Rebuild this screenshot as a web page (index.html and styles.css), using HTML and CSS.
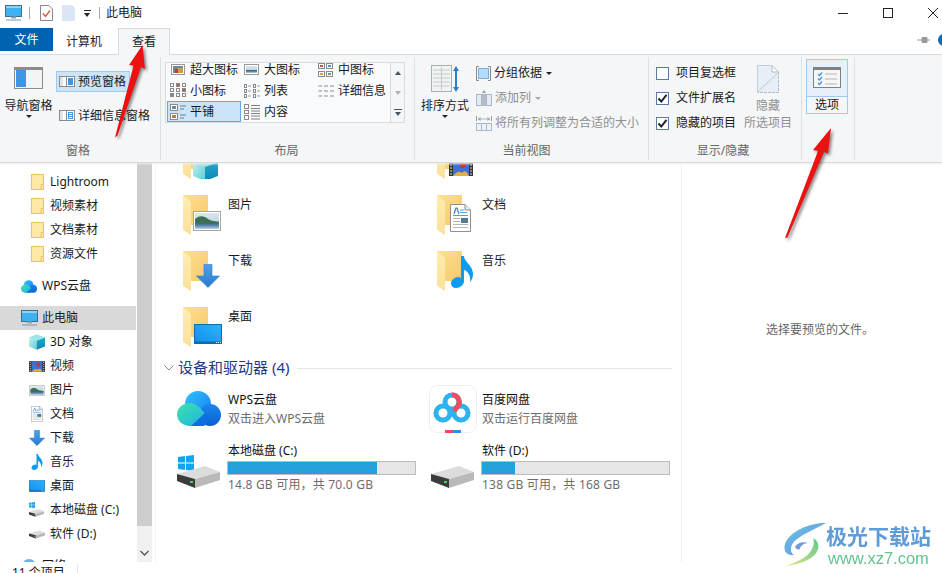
FILE: index.html
```html
<!DOCTYPE html>
<html lang="zh">
<head>
<meta charset="utf-8">
<title>此电脑</title>
<link rel="stylesheet" href="styles.css">
</head>
<body>
<svg class="defs" width="0" height="0" aria-hidden="true">
  <defs>
    <linearGradient id="gFolder" x1="0" y1="0" x2="1" y2="1"><stop offset="0" stop-color="#fee08f"/><stop offset="1" stop-color="#f4c96c"/></linearGradient>
    <linearGradient id="gFlap" x1="0" y1="0" x2="0" y2="1"><stop offset="0" stop-color="#ffedb0"/><stop offset="1" stop-color="#fbe09a"/></linearGradient>
    <linearGradient id="gBlue" x1="0" y1="0" x2="0" y2="1"><stop offset="0" stop-color="#4da3ea"/><stop offset="1" stop-color="#2a78cf"/></linearGradient>
    <linearGradient id="gDesk" x1="0" y1="1" x2="1" y2="0"><stop offset="0" stop-color="#0f8fe8"/><stop offset="1" stop-color="#2cb2ff"/></linearGradient>
    <linearGradient id="gSky" x1="0" y1="0" x2="0" y2="1"><stop offset="0" stop-color="#d8e8ee"/><stop offset=".5" stop-color="#c4d8e0"/><stop offset=".62" stop-color="#2f6188"/><stop offset=".8" stop-color="#5f8cab"/><stop offset="1" stop-color="#c3d6e3"/></linearGradient>
    <linearGradient id="gCubeL" x1="0" y1="0" x2="1" y2="1"><stop offset="0" stop-color="#c5f0ef"/><stop offset="1" stop-color="#58cdd4"/></linearGradient>
    <linearGradient id="gCubeR" x1="0" y1="0" x2="0" y2="1"><stop offset="0" stop-color="#25a8c8"/><stop offset="1" stop-color="#0d86b8"/></linearGradient>
    <linearGradient id="gWpsL" x1="0" y1="0" x2="1" y2="1"><stop offset="0" stop-color="#3fe3a6"/><stop offset="1" stop-color="#1cb0ea"/></linearGradient>
    <linearGradient id="gWpsT" x1="0" y1="0" x2="1" y2="1"><stop offset="0" stop-color="#2fc4ff"/><stop offset="1" stop-color="#1a7cf0"/></linearGradient>
    <linearGradient id="gWpsR" x1="0" y1="0" x2="0" y2="1"><stop offset="0" stop-color="#1b86ee"/><stop offset="1" stop-color="#0a5fd2"/></linearGradient>
    <linearGradient id="gSwirlB" x1="0" y1="0" x2="1" y2="1"><stop offset="0" stop-color="#6fc5ea"/><stop offset="1" stop-color="#5a8fd8"/></linearGradient>
    <linearGradient id="gSwirlG" x1="1" y1="0" x2="0" y2="1"><stop offset="0" stop-color="#5cc98a"/><stop offset="1" stop-color="#e6e58a"/></linearGradient>

    <symbol id="folder" viewBox="0 0 25 40">
      <polygon points="0,0 25,0 25,30 8,30" fill="url(#gFolder)"/>
      <polygon points="0,0 8,7 8,40 0,35" fill="url(#gFlap)"/>
    </symbol>
    <symbol id="picture" viewBox="0 0 28 20">
      <rect x=".5" y=".5" width="27" height="19" fill="#fff" stroke="#a5a5a5"/>
      <rect x="2" y="2" width="24" height="16" fill="url(#gSky)"/>
      <path d="M2 8C7 4 11 5 15 8 18 10 22 10 26 11V12H2Z" fill="#3d6f52"/>
    </symbol>
    <symbol id="doc" viewBox="0 0 21 28">
      <path d="M.5 .5H15L20.5 6V27.5H.5Z" fill="#fff" stroke="#8f8f8f"/>
      <path d="M15 .5V6H20.5" fill="#e8e8e8" stroke="#8f8f8f"/>
      <path d="M4 10 6 4H7L9 10" fill="none" stroke="#2b83d6" stroke-width="1.2"/>
      <path d="M10 6H14M10 8.5H17M3 11.5H18" stroke="#4aa2e6"/>
      <path d="M3 14.5H10M3 17.5H10M3 20.5H18M3 23.5H18" stroke="#b5b5b5"/>
      <rect x="11" y="14" width="7" height="5" fill="#4f7c92"/>
    </symbol>
    <symbol id="down" viewBox="0 0 24 24">
      <path d="M8 .5H16V12H23.5L12 23.5.5 12H8Z" fill="url(#gBlue)" stroke="#2a78cf" stroke-width=".6"/>
    </symbol>
    <symbol id="music" viewBox="0 0 22 32">
      <path d="M10 0H13C13 6 22 9 22 18 22 21 21 24 19 26 20 20 17 15 13 14V25C13 29 9 32 5 32 2 32 0 30 0 27.500 0 24 4 21 7 21 8 21 9 21.500 10 22Z" fill="#0a9cf0"/>
    </symbol>
    <symbol id="desk" viewBox="0 0 28 20">
      <rect x=".5" y=".5" width="27" height="19" fill="url(#gDesk)" stroke="#0f6da8"/>
      <rect x="1" y="17.500" width="26" height="2" fill="#0c6ea6"/>
      <path d="M22 18.500H23M24 18.500H25M26 18.500H27" stroke="#fff"/>
    </symbol>
    <symbol id="cube" viewBox="0 0 25 24">
      <polygon points="12,0 25,5 12,10 0,5" fill="#9de4e6"/>
      <polygon points="0,5 12,10 12,24 0,19" fill="url(#gCubeL)"/>
      <polygon points="12,10 25,5 25,19 12,24" fill="url(#gCubeR)"/>
    </symbol>
    <symbol id="film" viewBox="0 0 24 16">
      <rect width="24" height="16" fill="#333"/>
      <rect x="4" y="0" width="16" height="16" fill="#3f6fd0"/>
      <path d="M4 16 C8 11 11 11 13 13 15 10 18 11 20 16Z" fill="#e0b040"/>
      <circle cx="14" cy="5" r="3" fill="#c0392b"/>
      <path d="M1 2H3M1 5H3M1 8H3M1 11H3M1 14H3M21 2H23M21 5H23M21 8H23M21 11H23M21 14H23" stroke="#ddd"/>
    </symbol>
    <symbol id="nfolder" viewBox="0 0 13 16">
      <rect x=".5" y=".5" width="12" height="15" fill="#ffe9a6" stroke="#ecc555"/>
      <path d="M10 15V10.500H12.500" fill="none" stroke="#ecc555"/>
    </symbol>
    <symbol id="pc" viewBox="0 0 17 16">
      <rect x=".5" y=".5" width="16" height="11" fill="#3fb0f0" stroke="#3d6f92"/>
      <rect x="1" y="1" width="15" height="2" fill="#8ed2f7"/>
      <path d="M6 12.500H11" stroke="#8ea7b8" stroke-width="2"/>
      <path d="M1 15H16" stroke="#7b9ab0"/>
    </symbol>
    <symbol id="wpsc" viewBox="0 0 44 35">
      <circle cx="21" cy="13" r="13" fill="url(#gWpsT)"/>
      <circle cx="33" cy="24" r="11" fill="url(#gWpsR)"/>
      <path d="M13 12C19 12 22 16 26 20 30 24 30 35 22 35H13C6 35 0 30 0 23.500S6 12 13 12Z" fill="url(#gWpsL)"/>
      <path d="M14 35 28 22C30 25 33 35 25 35Z" fill="#0f6fe0"/>
    </symbol>
    <symbol id="baidu" viewBox="0 0 48 48">
      <rect x=".5" y=".5" width="47" height="47" rx="8" fill="#fff" stroke="#eeeeee"/>
      <circle cx="14" cy="28" r="7" fill="none" stroke="#2fb3ee" stroke-width="5"/>
      <circle cx="32" cy="28" r="7" fill="none" stroke="#2fb3ee" stroke-width="5"/>
      <circle cx="23" cy="17" r="7" fill="none" stroke="#2fb3ee" stroke-width="5"/>
      <path d="M23 10A7 7 0 0 1 29 21L25 26" fill="none" stroke="#e9505f" stroke-width="5"/>
      <rect x="16" y="45" width="8" height="3" fill="#f5476a"/>
      <rect x="24" y="45" width="8" height="3" fill="#2e8ff0"/>
    </symbol>
    <symbol id="disk" viewBox="0 0 43 22">
      <polygon points="0,8 28,0 43,6 18,13" fill="#dcdcdc"/>
      <polygon points="18,13 43,6 43,14 18,22" fill="#b9b9b9"/>
      <polygon points="0,8 18,13 18,22 0,15" fill="#3b3b3b"/>
      <rect x="13" y="15" width="3" height="2" fill="#3fd56a"/>
    </symbol>
    <symbol id="flag" viewBox="0 0 16 16">
      <polygon points="0,2 7,1 7,7.500 0,7.500" fill="#12a5ee"/>
      <polygon points="8,1 16,0 16,7.500 8,7.500" fill="#12a5ee"/>
      <polygon points="0,8.500 7,8.500 7,15 0,14" fill="#12a5ee"/>
      <polygon points="8,8.500 16,8.500 16,16 8,15" fill="#12a5ee"/>
    </symbol>
    <symbol id="pane" viewBox="0 0 16 11">
      <rect x=".5" y=".5" width="15" height="10" fill="#fff" stroke="#8a8a8a"/>
      <rect x="1" y="1" width="3" height="9" fill="#e4e4e4"/>
    </symbol>
  </defs>
</svg>

<div class="window">
  <header class="titlebar">
    <svg class="qa-pc" width="17" height="16"><use href="#pc"/></svg>
    <span class="qa-sep"></span>
    <svg class="qa-doc" width="13" height="16" viewBox="0 0 13 16"><path d="M.5 .5H9L12.500 4V15.500H.5Z" fill="#fff" stroke="#888"/><path d="M3 8.500 5.500 11.500 10 5.500" fill="none" stroke="#e0562c" stroke-width="1.300"/></svg>
    <svg class="qa-doc2" width="13" height="16" viewBox="0 0 13 16"><path d="M0 0H10L13 3V16H0Z" fill="#dbe5f3"/></svg>
    <span class="qa-drop"></span>
    <span class="qa-sep qa-sep2"></span>
    <span class="title-text">此电脑</span>
    <div class="win-controls">
      <svg width="10" height="10" viewBox="0 0 10 10"><path d="M0 5.500H10" stroke="#222"/></svg>
      <svg width="10" height="10" viewBox="0 0 10 10"><rect x=".5" y=".5" width="9" height="9" fill="none" stroke="#222"/></svg>
      <svg width="10" height="10" viewBox="0 0 10 10"><path d="M0 0 10 10M10 0 0 10" stroke="#222"/></svg>
    </div>
  </header>

  <nav class="tabs">
    <span class="tab tab-file">文件</span>
    <span class="tab tab-plain">计算机</span>
    <span class="tab tab-active">查看</span>
    <span class="tabs-right">
      <svg width="13" height="8" viewBox="0 0 13 8"><path d="M0 4H5M5 1.500H10V6.500H5ZM10 4H13" fill="#9a9a9a" stroke="#9a9a9a"/></svg>
      <span class="help-dot"></span>
    </span>
  </nav>

  <section class="ribbon">
    <div class="group g-pane">
      <div class="group-body">
        <div class="large large-nav">
          <svg width="29" height="22" viewBox="0 0 29 22"><rect x=".5" y=".5" width="28" height="21" fill="#f4f4f4" stroke="#8c8c8c"/><rect x="1" y="1" width="27" height="2" fill="#8c8c8c"/><rect x="2" y="3" width="10" height="17" fill="#3f96e4"/></svg>
          <span class="large-label">导航窗格</span>
          <span class="caret"></span>
        </div>
        <div class="pane-col">
          <div class="pane-btn pane-on">
            <svg width="16" height="11" viewBox="0 0 16 11"><use href="#pane"/><rect x="9" y="2" width="5" height="7" fill="#3f96e4"/><path d="M7.500 1V10" stroke="#8a8a8a"/></svg>
            <span>预览窗格</span>
          </div>
          <div class="pane-btn">
            <svg width="16" height="11" viewBox="0 0 16 11"><use href="#pane"/><rect x="9" y="2" width="5" height="7" fill="#3f96e4"/><path d="M7.500 1V10" stroke="#8a8a8a"/><path d="M10 3.500H13M10 5.500H13M10 7.500H13" stroke="#fff"/></svg>
            <span>详细信息窗格</span>
          </div>
        </div>
      </div>
      <div class="group-label">窗格</div>
    </div>

    <div class="group g-layout">
      <div class="group-body">
        <div class="gallery">
          <div class="gallery-grid">
            <div class="g-item"><svg width="16" height="12" viewBox="0 0 16 12"><rect x="1.500" y=".5" width="13" height="10" fill="#fff" stroke="#9a9a9a"/><rect x="3" y="2" width="10" height="7" fill="#6d8a9c"/><rect x="8" y="4" width="5" height="5" fill="#d49a3c"/><rect x="5" y="5" width="3" height="4" fill="#b0443a"/></svg><span>超大图标</span></div>
            <div class="g-item"><svg width="16" height="12" viewBox="0 0 16 12"><rect x=".5" y=".5" width="14" height="10" fill="#fff" stroke="#9a9a9a"/><rect x="2" y="2" width="11" height="7" fill="url(#gSky)"/></svg><span>大图标</span></div>
            <div class="g-item"><svg width="16" height="14" viewBox="0 0 16 14"><rect x=".5" y=".5" width="6" height="5" fill="#fff" stroke="#8a8a8a"/><rect x="8.500" y=".5" width="6" height="5" fill="#fff" stroke="#8a8a8a"/><rect x=".5" y="8.500" width="6" height="5" fill="#fff" stroke="#8a8a8a"/><rect x="8.500" y="8.500" width="6" height="5" fill="#fff" stroke="#8a8a8a"/><rect x="2" y="2" width="3" height="2" fill="#c0584a"/><rect x="10" y="2" width="3" height="2" fill="#5a8ac8"/><rect x="2" y="10" width="3" height="2" fill="#d0a04a"/><rect x="10" y="10" width="3" height="2" fill="#6aa06a"/></svg><span>中图标</span></div>

            <div class="g-item"><svg width="16" height="15" viewBox="0 0 16 15"><g fill="#fff" stroke="#8a8a8a"><rect x=".5" y=".5" width="3" height="3"/><rect x="6.500" y=".5" width="3" height="3"/><rect x="12.500" y=".5" width="3" height="3"/><rect x=".5" y="5.500" width="3" height="3"/><rect x="6.500" y="5.500" width="3" height="3"/><rect x="12.500" y="5.500" width="3" height="3"/><rect x=".5" y="10.500" width="3" height="3"/><rect x="6.500" y="10.500" width="3" height="3"/><rect x="12.500" y="10.500" width="3" height="3"/></g><rect x="7" y="1" width="2" height="2" fill="#c0584a"/><rect x="13" y="6" width="2" height="2" fill="#c0584a"/><rect x="1" y="11" width="2" height="2" fill="#5a8ac8"/></svg><span>小图标</span></div>
            <div class="g-item"><svg width="16" height="14" viewBox="0 0 16 14"><g fill="#fff" stroke="#8a8a8a"><rect x=".5" y=".5" width="2" height="3"/><rect x=".5" y="5.500" width="2" height="3"/><rect x=".5" y="10.500" width="2" height="3"/><rect x="9.500" y=".5" width="2" height="3"/><rect x="9.500" y="5.500" width="2" height="3"/><rect x="9.500" y="10.500" width="2" height="3"/></g><path d="M4 2H7M4 7H7M4 12H7M13 2H16M13 7H16M13 12H16" stroke="#9a9a9a"/></svg><span>列表</span></div>
            <div class="g-item"><svg width="16" height="14" viewBox="0 0 16 14"><path d="M.5 2H4M.5 7H4M.5 12H4M6 2H10M6 7H10M6 12H10M12 2H16M12 7H16M12 12H16" stroke="#8a8a8a"/></svg><span>详细信息</span></div>

            <div class="g-item g-selected"><svg width="16" height="16" viewBox="0 0 16 16"><rect x=".5" y=".5" width="7" height="6" fill="#fff" stroke="#8a8a8a"/><rect x=".5" y="9.500" width="7" height="6" fill="#fff" stroke="#8a8a8a"/><rect x="2" y="2" width="4" height="3" fill="#6d8a9c"/><rect x="2" y="11" width="4" height="3" fill="#c0784a"/><path d="M10 2H16M10 5H14M10 11H16M10 14H14" stroke="#7f7f7f"/></svg><span>平铺</span></div>
            <div class="g-item"><svg width="16" height="16" viewBox="0 0 16 16"><g fill="#fff" stroke="#8a8a8a"><rect x=".5" y=".5" width="4" height="4"/><rect x=".5" y="6.500" width="4" height="3"/><rect x=".5" y="11.500" width="4" height="4"/></g><path d="M7 1.500H16M7 4.500H16M7 7H16M7 9.500H16M7 12H16M7 15H16" stroke="#7f7f7f"/></svg><span>内容</span></div>
            <div class="g-item"></div>
          </div>
          <div class="gallery-scroll">
            <span class="gs-btn"><i class="up"></i></span>
            <span class="gs-btn"><i class="dn dim"></i></span>
            <span class="gs-btn"><i class="more"></i></span>
          </div>
        </div>
      </div>
      <div class="group-label">布局</div>
    </div>

    <div class="group g-view">
      <div class="group-body">
        <div class="large large-sort">
          <svg class="sort-ic" width="30" height="28" viewBox="0 0 30 28"><rect x=".5" y=".5" width="20" height="26" fill="#f2f4f4" stroke="#a7b2b2"/><path d="M2 5H19M2 9H19M2 13H19M2 17H19M2 21H19M10.500 2V25" stroke="#c3caca"/><path d="M25 3V25" stroke="#2f7fc8" stroke-width="2"/><path d="M22 6 25 1 28 6ZM22 22 25 27 28 22Z" fill="#2f7fc8"/></svg>
          <span class="large-label">排序方式</span>
          <span class="caret"></span>
        </div>
        <div class="view-col">
          <div class="view-row">
            <svg width="15" height="15" viewBox="0 0 15 15"><path d="M3 .5H.5V14.500H3M12 .5H14.500V14.500H12" fill="none" stroke="#8a8a8a"/><rect x="2.500" y="2.500" width="10" height="10" fill="#b4dcfa" stroke="#7fb0d8"/></svg>
            <span>分组依据</span><span class="caret caret-inline"></span>
          </div>
          <div class="view-row view-dim">
            <svg width="16" height="16" viewBox="0 0 16 16"><rect x=".5" y="4.500" width="15" height="11" fill="#e4eaf2" stroke="#a9b8cc"/><rect x="5" y="5" width="5" height="10" fill="#b5bcc6"/><path d="M5.500 5V15M10.500 5V15" stroke="#a9b8cc"/><path d="M6 3 8 0 10 3Z" fill="#a0a0a0"/></svg>
            <span>添加列</span><span class="caret caret-inline caret-dim"></span>
          </div>
          <div class="view-row view-dim">
            <svg width="16" height="16" viewBox="0 0 16 16"><rect x=".5" y="8.500" width="15" height="7" fill="#eef1f6" stroke="#a9b8cc"/><path d="M5.500 9V15M10.500 9V15M2 4H14" stroke="#a9b8cc"/><path d="M.5 1V6M15.500 1V6" stroke="#9a9a9a"/><path d="M2 4 4.500 2V6ZM14 4 11.500 2V6Z" fill="#8aa2c0"/></svg>
            <span>将所有列调整为合适的大小</span>
          </div>
        </div>
      </div>
      <div class="group-label">当前视图</div>
    </div>

    <div class="group g-show">
      <div class="group-body">
        <div class="check-col">
          <label class="check-row"><span class="box"></span><span>项目复选框</span></label>
          <label class="check-row"><span class="box"><svg width="11" height="11" viewBox="0 0 11 11"><path d="M1.500 5.500 4.300 8.500 9.500 1.800" fill="none" stroke="#222" stroke-width="2"/></svg></span><span>文件扩展名</span></label>
          <label class="check-row"><span class="box"><svg width="11" height="11" viewBox="0 0 11 11"><path d="M1.500 5.500 4.300 8.500 9.500 1.800" fill="none" stroke="#222" stroke-width="2"/></svg></span><span>隐藏的项目</span></label>
        </div>
        <div class="hide-col">
          <svg width="22" height="28" viewBox="0 0 22 28"><path d="M.5 .5H15L21.500 7V27.500H.5Z" fill="#e8eef8"/><path d="M15 .5 21.500 7H15Z" fill="#fff" stroke="#b4bcc8"/><path d="M21.500 7V27.500H.5M.5 27 21 8" fill="none" stroke="#b4bcc8" stroke-dasharray="3 1"/><path d="M.5 .5V27.500M.5 .5H15" fill="none" stroke="#c4ccd8"/></svg>
          <span class="hide-a">隐藏</span>
          <span class="hide-b">所选项目</span>
        </div>
      </div>
      <div class="group-label">显示/隐藏</div>
    </div>

    <div class="group g-opt">
      <div class="group-body">
        <div class="opt-btn">
          <div class="opt-top">
            <svg width="28" height="21" viewBox="0 0 28 21"><rect x=".5" y=".5" width="27" height="20" fill="#f6f6f6" stroke="#808080"/><rect x="1" y="1" width="26" height="2" fill="#808080"/><path d="M5 7 6.500 8.500 9 5.500M5 11.500 6.500 13 9 10M5 16 6.500 17.500 9 14.500" fill="none" stroke="#3f96e4" stroke-width="1.300"/><path d="M12 7H24M12 12H24M12 17H24" stroke="#b5b5b5"/></svg>
          </div>
          <div class="opt-bottom">选项</div>
        </div>
      </div>
    </div>
  </section>

  <main class="body">
    <aside class="nav">
      <div class="nav-list">
        <div class="nav-row ind"><svg width="13" height="16"><use href="#nfolder"/></svg><span>Lightroom</span></div>
        <div class="nav-row ind"><svg width="13" height="16"><use href="#nfolder"/></svg><span>视频素材</span></div>
        <div class="nav-row ind"><svg width="13" height="16"><use href="#nfolder"/></svg><span>文档素材</span></div>
        <div class="nav-row ind nav-end"><svg width="13" height="16"><use href="#nfolder"/></svg><span>资源文件</span></div>
        <div class="nav-row top nav-end"><svg width="16" height="13"><use href="#wpsc"/></svg><span>WPS云盘</span></div>
        <div class="nav-row top nav-sel"><svg width="17" height="16"><use href="#pc"/></svg><span>此电脑</span></div>
        <div class="nav-row ind2"><svg width="16" height="16"><use href="#cube"/></svg><span>3D 对象</span></div>
        <div class="nav-row ind2"><svg width="16" height="11"><use href="#film"/></svg><span>视频</span></div>
        <div class="nav-row ind2"><svg width="16" height="11"><use href="#picture"/></svg><span>图片</span></div>
        <div class="nav-row ind2"><svg width="16" height="16" viewBox="-2 0 25 28"><use href="#doc" width="21" height="28"/></svg><span>文档</span></div>
        <div class="nav-row ind2"><svg width="16" height="16"><use href="#down"/></svg><span>下载</span></div>
        <div class="nav-row ind2"><svg width="16" height="16"><use href="#music"/></svg><span>音乐</span></div>
        <div class="nav-row ind2"><svg width="16" height="12"><use href="#desk"/></svg><span>桌面</span></div>
        <div class="nav-row ind2"><svg width="16" height="16" viewBox="0 0 16 16"><use href="#flag" width="6" height="6"/><use href="#disk" y="7" width="15" height="8"/></svg><span>本地磁盘 (C:)</span></div>
        <div class="nav-row ind2 nav-end"><svg width="16" height="9"><use href="#disk"/></svg><span>软件 (D:)</span></div>
        <div class="nav-row top"><svg width="16" height="16" viewBox="0 0 16 16"><circle cx="8" cy="8" r="7" fill="#6fb4e0"/></svg><span>网络</span></div>
      </div>
    </aside>
    <div class="vscroll">
      <div class="vthumb"></div>
      <div class="vtrack"><svg width="9" height="6" viewBox="0 0 9 6"><path d="M.5 1 4.500 5 8.500 1" fill="none" stroke="#555" stroke-width="1.300"/></svg></div>
    </div>
    <div class="content">
      <div class="tiles">
        <div class="tile"><svg class="tile-ic" width="45" height="40" viewBox="0 0 45 40"><use href="#folder" width="25" height="40"/><use href="#cube" x="10" y="18" width="25" height="24"/></svg><span></span></div>
        <div class="tile"><svg class="tile-ic" width="45" height="40" viewBox="0 0 45 40"><use href="#folder" width="25" height="40"/><use href="#film" x="12" y="21" width="24" height="16"/></svg><span></span></div>
        <div class="tile"><svg class="tile-ic" width="45" height="40" viewBox="0 0 45 40"><use href="#folder" width="25" height="40"/><use href="#picture" x="10" y="16" width="28" height="20"/></svg><span>图片</span></div>
        <div class="tile"><svg class="tile-ic" width="45" height="40" viewBox="0 0 45 40"><use href="#folder" width="25" height="40"/><use href="#doc" x="13" y="9" width="21" height="28"/></svg><span>文档</span></div>
        <div class="tile"><svg class="tile-ic" width="45" height="40" viewBox="0 0 45 40"><use href="#folder" width="25" height="40"/><use href="#down" x="13" y="13" width="24" height="24"/></svg><span>下载</span></div>
        <div class="tile"><svg class="tile-ic" width="45" height="40" viewBox="0 0 45 40"><use href="#folder" width="25" height="40"/><use href="#music" x="14" y="5" width="22" height="32"/></svg><span>音乐</span></div>
        <div class="tile"><svg class="tile-ic" width="45" height="40" viewBox="0 0 45 40"><use href="#folder" width="25" height="40"/><use href="#desk" x="11" y="17" width="28" height="20"/></svg><span>桌面</span></div>
      </div>

      <div class="section-head">
        <svg width="10" height="6" viewBox="0 0 10 6"><path d="M.5 .5 5 5 9.500 .5" fill="none" stroke="#8a8a8a"/></svg>
        <span class="section-title">设备和驱动器 (4)</span>
        <span class="section-line"></span>
      </div>

      <div class="drives">
        <div class="drive drive-app">
          <div class="drive-ic"><svg width="44" height="35"><use href="#wpsc"/></svg></div>
          <div class="drive-text"><div class="drive-name">WPS云盘</div><div class="drive-sub">双击进入WPS云盘</div></div>
        </div>
        <div class="drive drive-app">
          <div class="drive-ic"><svg class="baidu-ic" width="48" height="48"><use href="#baidu"/></svg></div>
          <div class="drive-text"><div class="drive-name">百度网盘</div><div class="drive-sub">双击运行百度网盘</div></div>
        </div>
        <div class="drive drive-disk">
          <div class="drive-ic drive-ic-disk"><svg width="44" height="35" viewBox="0 0 44 35"><use href="#flag" x="1" width="16" height="16"/><use href="#disk" y="11" width="43" height="22"/></svg></div>
          <div class="drive-text">
            <div class="drive-name">本地磁盘 (C:)</div>
            <div class="bar"><div class="bar-fill" style="width:149px"></div></div>
            <div class="drive-sub drive-free">14.8 GB 可用，共 70.0 GB</div>
          </div>
        </div>
        <div class="drive drive-disk">
          <div class="drive-ic drive-ic-disk"><svg width="44" height="35" viewBox="0 0 44 35"><use href="#disk" y="11" width="43" height="22"/></svg></div>
          <div class="drive-text">
            <div class="drive-name">软件 (D:)</div>
            <div class="bar"><div class="bar-fill" style="width:33px"></div></div>
            <div class="drive-sub drive-free">138 GB 可用，共 168 GB</div>
          </div>
        </div>
      </div>
    </div>
    <aside class="preview">选择要预览的文件。</aside>
  </main>

  <footer class="status"><span>11 个项目</span><i class="status-sep"></i></footer>

  <svg class="arrow arrow-a" width="50" height="110" viewBox="0 0 50 110"><path d="M11 101.500 13.500 99.500 37 31 41 33 38.500 9 25 29 29.500 29.500Z" fill="#ee1111"/></svg>
  <svg class="arrow arrow-b" width="60" height="124" viewBox="0 0 60 124"><path d="M5 120 7.500 119.500 44 34 48 35.500 51 10 33 32 38 33Z" fill="#ee1111"/></svg>

  <div class="watermark">
    <svg width="44" height="44" viewBox="0 0 44 44">
      <path d="M43 1C26 1 7 9 2 22 0 29 4 34 11 33 6 30 7 22 14 17 22 11 32 7 43 1Z" fill="url(#gSwirlB)"/>
      <path d="M12 25C14 21 20 19 25 21 21 21 17 24 17 27 15 28 13 27 12 25Z" fill="#6f9ade"/>
      <path d="M30 16C38 20 37 30 28 36 20 41 11 43 3 44 13 40 23 36 27 30 30 26 32 21 30 16Z" fill="url(#gSwirlG)"/>
    </svg>
    <div class="wm-text"><div class="wm-cn">极光下载站</div><div class="wm-en">www.xz7.com</div></div>
  </div>
</div>
</body>
</html>
```

FILE: styles.css
```css
* { box-sizing: border-box; }
html, body { margin: 0; padding: 0; height: 100%; overflow: hidden; background: #fff; }
body { font: 12px/18px "Noto Sans", "Noto Sans CJK SC", sans-serif; color: #1a1a1a; }
.defs { position: absolute; }
svg { display: block; flex: none; }

.window { position: relative; width: 942px; height: 573px; overflow: hidden; display: flex; flex-direction: column; }

/* title bar */
.titlebar { height: 28px; display: flex; align-items: center; padding: 0 4px 2px 4px; flex: none; }
.qa-pc { margin-left: 1px; }
.qa-sep { width: 1px; height: 12px; background: #a8a8a8; margin-left: 7px; }
.qa-doc { margin-left: 10px; }
.qa-doc2 { margin-left: 9px; }
.qa-drop { width: 7px; height: 6px; margin-left: 9px; border-top: 1px solid #222; position: relative; }
.qa-drop::after { content: ""; position: absolute; left: 0; top: 2px; border: 3.5px solid transparent; border-top: 4px solid #222; border-bottom: 0; }
.qa-sep2 { margin-left: 8px; }
.title-text { margin-left: 6px; }
.win-controls { margin-left: auto; display: flex; gap: 35px; }

/* tabs */
.tabs { height: 26px; display: flex; align-items: flex-start; flex: none; position: relative; z-index: 2; }
.tab { text-align: center; }
.tab-file { width: 53px; height: 23px; line-height: 24px; background: #0063b1; color: #fff; }
.tab-plain { margin-left: 13px; width: 36px; line-height: 27px; }
.tab-active { margin-left: 16px; width: 52px; height: 27px; line-height: 26px; background: #f5f6f7; border: 1px solid #d9d9d9; border-bottom: 0; }
.tabs-right { margin-left: auto; display: flex; align-items: center; height: 24px; gap: 8px; margin-right: -8px; }
.help-dot { width: 12px; height: 12px; border-radius: 50%; background: #0f6cbd; }

/* ribbon */
.ribbon { height: 109px; flex: none; display: flex; background: #f5f6f7; border-top: 1px solid #d9d9d9; border-bottom: 1px solid #d9d9d9; box-shadow: 0 1px 2px #eeeeee; position: relative; z-index: 1; padding: 2px 0 2px; }
.group { display: flex; flex-direction: column; border-right: 1px solid #dfe0e1; flex: none; }
.group-body { flex: 1; display: flex; min-height: 0; }
.group-label { height: 18px; text-align: center; color: #666; }
.g-pane { width: 161px; }
.g-pane .group-label { padding-right: 4px; }
.g-layout { width: 254px; }
.g-layout .group-label { padding-right: 2px; }
.g-view { width: 234px; }
.g-view .group-label { padding-right: 10px; }
.g-show { width: 153px; }
.g-show .group-label { padding-right: 4px; }
.g-opt { width: 53px; }

.large { display: flex; flex-direction: column; align-items: center; padding-top: 10px; }
.large-nav { width: 57px; }
.large-label { margin-top: 8px; white-space: nowrap; }
.large-sort { width: 60px; padding-top: 8px; }
.large-sort .large-label { margin-top: 4px; }
.sort-ic { margin-left: 2px; }
.caret { width: 0; height: 0; border: 3px solid transparent; border-top: 3px solid #222; border-bottom: 0; }
.caret-inline { margin: 0 0 0 1px; }
.caret-dim { border-top-color: #a8a8a8; }

.pane-col { display: flex; flex-direction: column; padding-top: 14px; gap: 13px; margin-left: -1px; }
.pane-btn { height: 21px; display: flex; align-items: center; gap: 3px; padding-left: 3px; white-space: nowrap; }
.pane-on { width: 74px; background: #cce4f7; border: 1px solid #9ccbf0; padding-left: 2px; }

.g-layout .group-body { padding: 5px 0 0 4px; }
.gallery { width: 240px; height: 61px; border: 1px solid #dadbdc; background: #f9fafc; display: flex; overflow: hidden; }
.gallery-grid { width: 224px; margin: -4px 0 0 1px; display: grid; grid-template-columns: repeat(3, 74px); grid-auto-rows: 21px; }
.g-item { display: flex; align-items: center; padding-left: 3px; min-width: 0; }
.g-item svg { width: 16px; margin-right: 4px; }
.g-item span { white-space: nowrap; }
.g-selected { background: #cce4f7; outline: 1px solid #64a8e4; outline-offset: -1px; }
.gallery-scroll { width: 14px; margin-left: auto; border-left: 1px solid #dadbdc; display: flex; flex-direction: column; background: #f5f6f7; }
.gs-btn { flex: 1; display: flex; align-items: center; justify-content: center; }
.gs-btn i { display: block; width: 0; height: 0; border: 3.5px solid transparent; }
.gs-btn .up { border-bottom: 4px solid #445566; border-top: 0; }
.gs-btn .dn { border-top: 4px solid #b0b0b0; border-bottom: 0; }
.gs-btn .more { position: relative; border-top: 4px solid #445566; border-bottom: 0; margin-top: 3px; }
.gs-btn .more::before { content: ""; position: absolute; left: -4px; top: -7px; width: 8px; height: 1px; background: #445566; }

.view-col { display: flex; flex-direction: column; padding-top: 7px; gap: 7px; margin-left: 1px; }
.view-row { height: 18px; display: flex; align-items: center; gap: 3px; white-space: nowrap; }
.view-dim { color: #8f8f8f; }

.check-col { display: flex; flex-direction: column; padding: 7px 0 0 7px; gap: 7px; }
.check-row { height: 18px; display: flex; align-items: center; gap: 7px; white-space: nowrap; }
.box { width: 13px; height: 13px; border: 1px solid #5b7aa6; background: #fff; display: flex; align-items: center; justify-content: center; }
.hide-col { display: flex; flex-direction: column; align-items: center; width: 48px; margin-left: 8px; padding-top: 8px; color: #8f8f8f; }
.hide-a { margin-top: 4px; }
.hide-b { margin-top: -1px; white-space: nowrap; }

.opt-btn { width: 42px; height: 55px; margin: 2px 0 0 4px; border: 1px solid #9ccbf5; display: flex; flex-direction: column; }
.opt-top { height: 37px; background: #e6f0fa; border-bottom: 1px solid #9ccbf5; display: flex; justify-content: center; padding-top: 7px; }
.opt-bottom { flex: 1; text-align: center; line-height: 16px; }

/* body */
.body { flex: none; height: 399px; display: flex; overflow: hidden; }
.nav { width: 137px; flex: none; overflow: hidden; }
.nav-list { padding-top: 7px; }
.nav-row { height: 24px; display: flex; align-items: center; white-space: nowrap; }
.nav-row.ind { padding-left: 31px; gap: 6px; }
.nav-row.ind2 { padding-left: 29px; gap: 5px; }
.nav-row.top { padding-left: 21px; gap: 5px; }
.nav-row.nav-sel { gap: 4px; }
.nav-end { margin-bottom: 8px; }
.nav-sel { background: #d9d9d9; width: 136px; }
.vscroll { width: 15px; flex: none; display: flex; flex-direction: column; background: #f0f0f0; }
.vthumb { height: 363px; background: #cdcdcd; }
.vtrack { flex: 1; display: flex; justify-content: center; align-items: flex-start; padding-top: 24px; }

.content { width: 526px; flex: none; border-left: 1px solid #f4f4f4; margin-left: 3px; padding-left: 7px; overflow: hidden; }
.tiles { margin: -24px 0 0 20px; display: grid; grid-template-columns: repeat(2, 254px); grid-auto-rows: 40px; row-gap: 16px; }
.tile { display: flex; }
.tile span { padding-top: 1px; }
.section-head { margin-top: 12px; height: 18px; display: flex; align-items: center; margin-left: 1px; }
.section-title { margin: 0 0 2px 4px; font-size: 15px; color: #1e3a8a; white-space: nowrap; }
.section-line { flex: 1; height: 1px; background: #e5e5e5; margin: 0 9px 0 8px; }
.drives { margin: 13px 0 0 14px; display: grid; grid-template-columns: repeat(2, 254px); grid-template-rows: 51px 60px; }
.drive { display: flex; }
.drive-ic { width: 51px; flex: none; }
.drive-ic svg { margin-top: 1px; }
.drive-ic .baidu-ic { margin: -5px 0 0 -2px; }
.drive-ic-disk svg { margin-top: 14px; }
.drive-text { width: 189px; padding-top: 1px; }
.drive-name { height: 18px; color: #111; white-space: nowrap; }
.drive-sub { color: #6d6d6d; white-space: nowrap; margin-top: 1px; }
.drive-free { letter-spacing: .2px; margin-top: 1px; }
.bar { width: 189px; height: 14px; margin: 1px 0 0 -1px; background: #e6e6e6; border: 1px solid #bcbcbc; }
.bar-fill { height: 100%; background: #26a0da; }

.preview { flex: 1; border-left: 1px solid #f0f0f0; padding: 158px 0 0 84px; color: #666; white-space: nowrap; }

/* status */
.status { flex: none; height: 20px; padding: 2px 0 0 12px; display: flex; line-height: 18px; }
.status-sep { width: 1px; height: 18px; background: #e6e6e6; margin-left: 12px; }

/* overlays on the picture */
.arrow { position: absolute; z-index: 5; filter: drop-shadow(2px 2px 1.500px rgba(0, 0, 0, .45)); }
.arrow-a { left: 104px; top: 36px; }
.arrow-b { left: 780px; top: 118px; }

.watermark { position: absolute; z-index: 5; left: 783px; top: 522px; display: flex; filter: blur(.3px); }
.wm-text { margin: 1px 0 0 -1px; }
.wm-cn { font: bold 21px/24px "Noto Sans CJK SC", sans-serif; color: #5f9bd6; white-space: nowrap; }
.wm-en { font: 16.500px/17px "Liberation Sans", sans-serif; color: #63c48f; white-space: nowrap; margin: 3px 0 0 2px; }
```
